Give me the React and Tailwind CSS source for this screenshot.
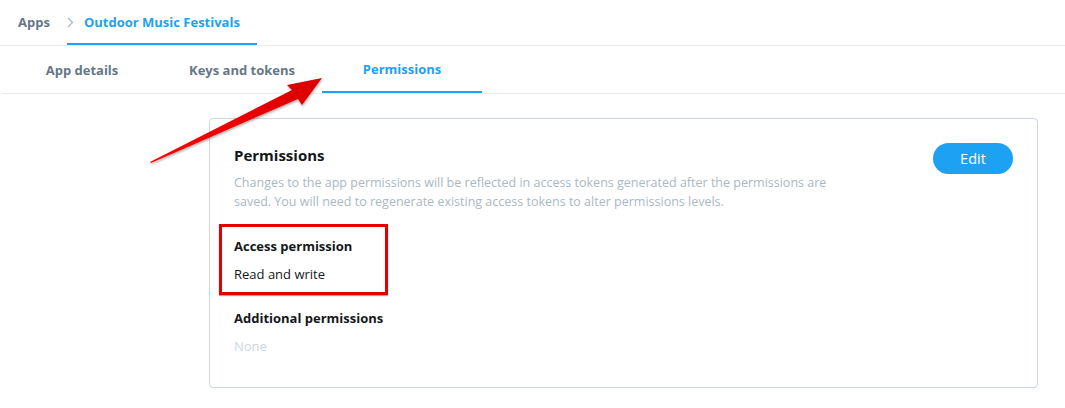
import React from 'react';

const font = { fontFamily: '"Open Sans", "Noto Sans", Arial, sans-serif' };

function Arrow() {
  return (
    <svg
      className="absolute left-0 top-0 pointer-events-none"
      width="1065"
      height="408"
      viewBox="0 0 1065 408"
    >
      <defs>
        <linearGradient id="arrowRed" x1="0" y1="1" x2="1" y2="0">
          <stop offset="0" stopColor="#f00" />
          <stop offset="1" stopColor="#d80000" />
        </linearGradient>
        <filter id="arrowShadow" x="-10%" y="-10%" width="120%" height="130%">
          <feDropShadow dx="0.5" dy="1.5" stdDeviation="1" floodColor="#000" floodOpacity="0.35" />
        </filter>
      </defs>
      <polygon
        points="150,162 292,90 287,85 322,78 302,105 298,99 151,163"
        fill="url(#arrowRed)"
        filter="url(#arrowShadow)"
      />
    </svg>
  );
}

export default function App() {
  return (
    <div className="relative w-[1065px] h-[408px] bg-white overflow-hidden" style={font}>
      {/* breadcrumb */}
      <div className="flex items-end h-[46px] border-b border-[#e6ecf0]">
        <span className="ml-[18px] mb-[13px] text-[13px] leading-[20px] font-bold text-[#657786]">Apps</span>
        <div className="ml-[17px] w-[190px] h-[45px] flex items-center border-b-2 border-[#1da1f2]">
          <svg width="7" height="11" viewBox="0 0 7 11" className="mt-[1px]">
            <path d="M1 1l4.5 4.5L1 10" fill="none" stroke="#aab8c2" strokeWidth="1.3" />
          </svg>
          <span className="ml-[10px] text-[13px] leading-[20px] font-bold text-[#1da1f2]">
            Outdoor Music Festivals
          </span>
        </div>
      </div>

      {/* tabs */}
      <div className="flex ml-[2px] h-[48px] border-b border-[#e6ecf0]">
        <div className="w-[160px] flex items-center justify-center pt-[2px] text-[13px] font-bold text-[#657786]">
          App details
        </div>
        <div className="w-[160px] flex items-center justify-center pt-[2px] text-[13px] font-bold text-[#657786]">
          Keys and tokens
        </div>
        <div className="w-[160px] flex items-center justify-center pt-[2px] text-[13px] font-bold text-[#1da1f2] border-b-2 border-[#1da1f2]">
          Permissions
        </div>
      </div>

      {/* card */}
      <div className="ml-[209px] mt-[24px] w-[829px] border border-[#ccd6dd] rounded-[4px] px-[24px] pt-[24px] pb-[31px]">
        <div className="flex items-start justify-between">
          <div>
            <h2 className="text-[15px] leading-[25px] font-bold text-[#14171a]">Permissions</h2>
            <p className="mt-[5px] w-[610px] text-[12.5px] leading-[19px] text-[#aab8c2]">
              Changes to the app permissions will be reflected in access tokens generated after the permissions are
              saved. You will need to regenerate existing access tokens to alter permissions levels.
            </p>
          </div>
          <button className="w-[80px] h-[31px] rounded-full bg-[#1da1f2] text-white text-[14.5px] leading-[20px]">
            Edit
          </button>
        </div>

        <div className="mt-[13px] -ml-[15px] w-[169px] border-[3px] border-[#e30000] px-[12px] pt-[9px] pb-[8px] shadow-[0_1px_1px_rgba(0,0,0,0.35)]">
          <div className="text-[13px] leading-[20px] font-bold text-[#14171a]">Access permission</div>
          <div className="mt-[8px] text-[13px] leading-[20px] text-[#14171a]">Read and write</div>
        </div>

        <div className="mt-[13px] text-[13px] leading-[20px] font-bold text-[#14171a]">Additional permissions</div>
        <div className="mt-[8px] text-[13px] leading-[20px] text-[#ccd6dd]">None</div>
      </div>

      <Arrow />
    </div>
  );
}
